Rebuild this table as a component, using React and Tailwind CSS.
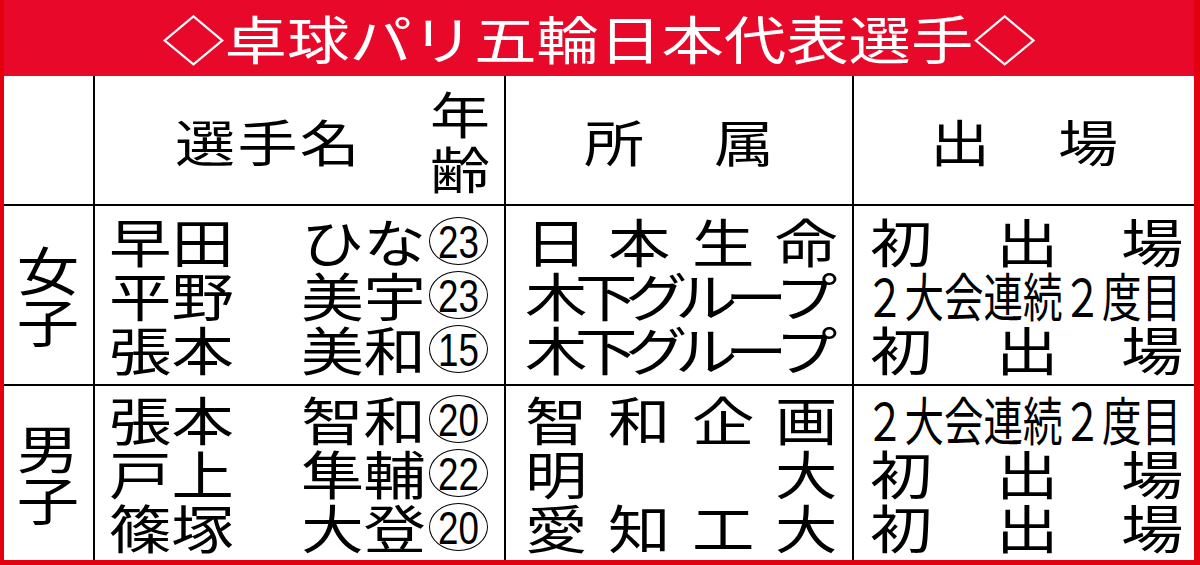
import React from "react";

const women = [
  { sei: "早田", mei: "ひな", age: "23", team: "日本生命", note: "初出場" },
  { sei: "平野", mei: "美宇", age: "23", team: "木下グループ", note: "２大会連続２度目" },
  { sei: "張本", mei: "美和", age: "15", team: "木下グループ", note: "初出場" },
];

const men = [
  { sei: "張本", mei: "智和", age: "20", team: "智和企画", note: "２大会連続２度目" },
  { sei: "戸上", mei: "隼輔", age: "22", team: "明大", note: "初出場" },
  { sei: "篠塚", mei: "大登", age: "20", team: "愛知工大", note: "初出場" },
];

// each char in its own box, stretched sideways like the paper's font
const Spread = ({ text }) => (
  <div className="flex justify-between items-center h-[54px]">
    {[...text].map((c, i) => (
      <span key={i} className="inline-block w-[50px] text-center scale-x-[1.2]">
        {c}
      </span>
    ))}
  </div>
);

const Note = ({ text }) =>
  text.length > 3 ? (
    <div className="flex items-center h-[54px] -ml-[10px]">
      <span className="inline-block whitespace-nowrap origin-left scale-x-[0.76]">{text}</span>
    </div>
  ) : (
    <Spread text={text} />
  );

const Age = ({ n }) => (
  <span className="ml-[3px] shrink-0 w-[59px] h-[48px] rounded-[50%] border-[1.5px] border-black flex items-center justify-center text-[46px] leading-none font-['Liberation_Sans',sans-serif]">
    <span className="inline-block scale-x-[0.8] mt-[1px]">{n}</span>
  </span>
);

const Section = ({ label, rows, top }) => (
  <div className={`flex ${top ? "h-[180px] shrink-0 border-b-2 border-black" : "flex-1"}`}>
    <div className="w-[91px] shrink-0 border-r-2 border-black flex flex-col items-center justify-center leading-[52px]">
      {[...label].map((c) => (
        <span key={c} className="inline-block scale-x-[1.2]">
          {c}
        </span>
      ))}
    </div>
    <div className="w-[411px] shrink-0 border-r-2 border-black flex flex-col justify-center pl-[14px] pr-[16px]">
      {rows.map((r, i) => (
        <div key={i} className="flex items-center h-[54px]">
          <span className="inline-block origin-left scale-x-[1.2]">{r.sei}</span>
          <span className="flex-1" />
          <span className="inline-block origin-right scale-x-[1.2]">{r.mei}</span>
          <Age n={r.age} />
        </div>
      ))}
    </div>
    <div className="w-[348px] shrink-0 border-r-2 border-black flex flex-col justify-center pl-[24px] pr-[22px]">
      {rows.map((r, i) => (
        <Spread key={i} text={r.team} />
      ))}
    </div>
    <div className="flex-1 min-w-0 flex flex-col justify-center pl-[21px] pr-[18px]">
      {rows.map((r, i) => (
        <Note key={i} text={r.note} />
      ))}
    </div>
  </div>
);

export default function App() {
  return (
    <div className="w-[1200px] h-[565px] bg-[#e3000f] pl-[4px] pr-[6px] pb-[5px] flex flex-col font-['Noto_Sans_CJK_JP','Noto_Sans',sans-serif]">
      <div className="h-[76px] shrink-0 bg-[#e8082a] flex items-center justify-center text-white text-[52px] leading-none">
        <span className="inline-block scale-x-[1.2]">◇卓球パリ五輪日本代表選手◇</span>
      </div>
      <div className="flex-1 bg-white flex flex-col text-black text-[52px] leading-[54px]">
        {/* header row */}
        <div className="h-[130px] shrink-0 flex border-b-2 border-black text-[50px]">
          <div className="w-[91px] shrink-0 border-r-2 border-black" />
          <div className="w-[411px] shrink-0 border-r-2 border-black flex items-center pl-[80px] pr-[14px]">
            <span className="inline-block origin-left scale-x-[1.2] tracking-[2px]">選手名</span>
            <span className="flex-1" />
            <div className="flex flex-col items-end leading-[55px]">
              <span className="inline-block origin-right scale-x-[1.2]">年</span>
              <span className="inline-block origin-right scale-x-[1.2]">齢</span>
            </div>
          </div>
          <div className="w-[348px] shrink-0 border-r-2 border-black flex items-center justify-center gap-[80px]">
            <span className="inline-block scale-x-[1.2]">所</span>
            <span className="inline-block scale-x-[1.2]">属</span>
          </div>
          <div className="flex-1 flex items-center justify-center gap-[78px]">
            <span className="inline-block scale-x-[1.2]">出</span>
            <span className="inline-block scale-x-[1.2]">場</span>
          </div>
        </div>
        <Section label="女子" rows={women} top />
        <Section label="男子" rows={men} />
      </div>
    </div>
  );
}
